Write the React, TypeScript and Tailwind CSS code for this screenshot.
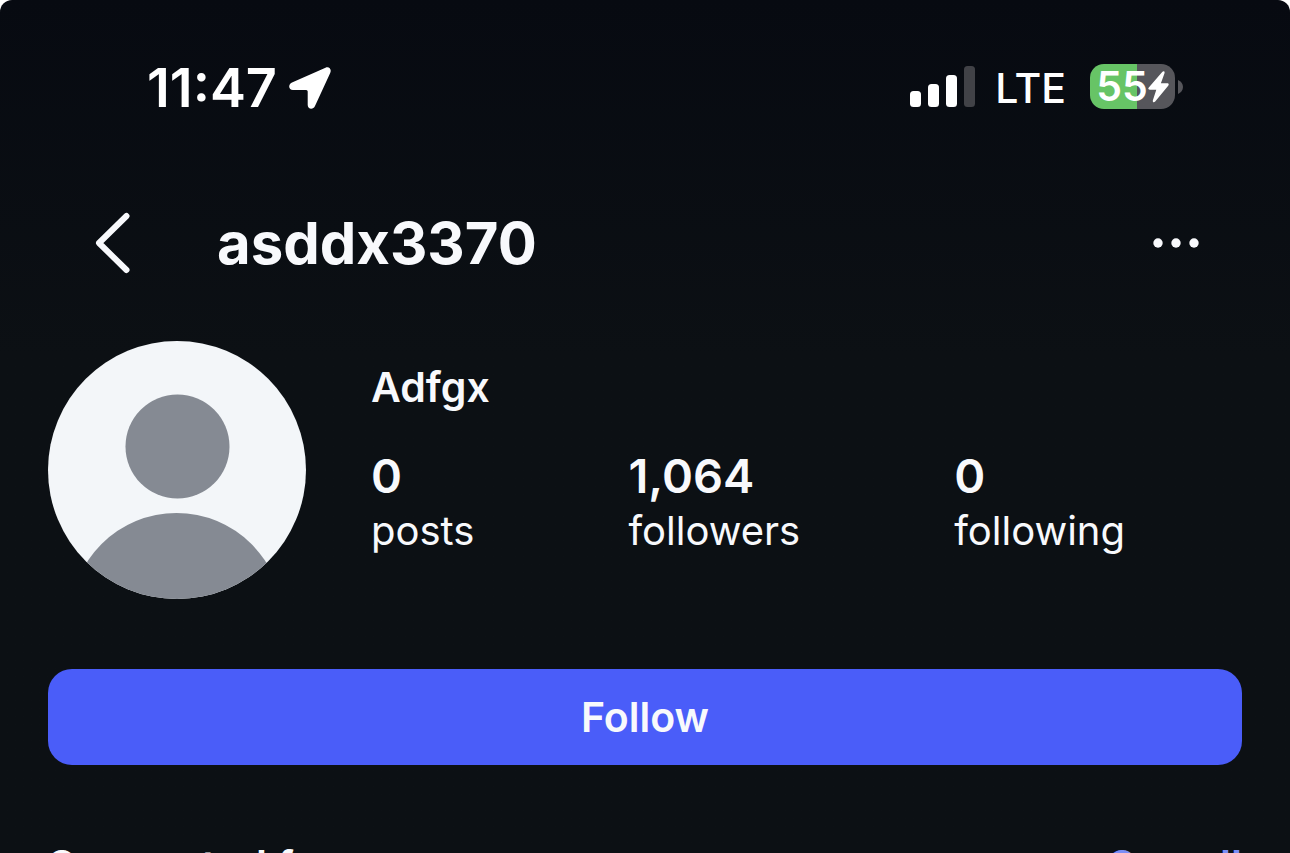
const stats = [
  { value: "0", label: "posts" },
  { value: "1,064", label: "followers" },
  { value: "0", label: "following" },
];

function StatusBar() {
  return (
    <div className="flex h-[176px] items-center justify-between pr-[107px] pl-[147px] text-white">
      <div className="flex items-center gap-3">
        <time className="text-[54px] leading-[64px] font-semibold">11:47</time>
        <svg className="h-[42px] w-[42px]" viewBox="0 0 42 42" fill="currentColor" aria-hidden="true">
          <path d="M36.500.7 3 15.500C-1.200 17.500-.5 23.100 4 23.100H17.200Q18.700 23.100 18.700 24.600V38C18.700 42.400 24.200 43 26 39.100L41.200 6.100C42.900 2.400 40.200-.9 36.500.7Z" />
        </svg>
      </div>
      <div className="flex items-center">
        <svg className="h-[44px] w-[66px]" viewBox="0 0 66 44" aria-hidden="true">
          <rect x="1" y="25" width="11" height="16" rx="3.500" fill="#fff" />
          <rect x="19" y="18" width="11" height="23" rx="3.500" fill="#fff" />
          <rect x="37" y="9" width="11" height="32" rx="3.500" fill="#fff" />
          <rect x="55" y="0" width="11" height="41" rx="3.500" fill="#414247" />
        </svg>
        <span className="pr-6 pl-5 text-[41px] leading-[64px] font-medium">LTE</span>
        <div className="flex items-center gap-[3px] pb-[3px]">
          <div className="flex h-[45px] w-[85px] items-center justify-center rounded-[14px] bg-linear-to-r from-[#67c466] from-55% to-[#56565b] to-55%">
            <span className="text-[41px] leading-[45px] font-semibold">55</span>
            <svg className="h-[32px] w-[21px]" viewBox="0 0 21 32" fill="currentColor" aria-hidden="true">
              <path d="M14.200 1 .8 16.400C-.2 17.600.3 18.800 1.800 18.800H8.300L4.900 29.300C4.300 31.200 5.900 32 7.200 30.600L20.200 14.700C21.200 13.500 20.700 12.300 19.200 12.300H12.900L16.500 2.200C17.100.3 15.500-.4 14.200 1Z" />
            </svg>
          </div>
          <svg className="h-[14px] w-[5px]" viewBox="0 0 5 14" fill="#56565b" aria-hidden="true">
            <path d="M0 0C3 1.300 5 4 5 7S3 12.700 0 14Z" />
          </svg>
        </div>
      </div>
    </div>
  );
}

function Header() {
  return (
    <header className="flex h-[134px] items-center pr-[90px] pl-[93px]">
      <button type="button" aria-label="Back" className="flex">
        <svg className="h-[64px] w-[40px]" viewBox="0 0 40 64" fill="none" aria-hidden="true">
          <path d="M33.500 5 6 32 33.500 59" stroke="#f8f9fc" strokeWidth="6" strokeLinecap="round" strokeLinejoin="round" />
        </svg>
      </button>
      <h1 className="flex-1 pl-[84px] text-[58px] leading-[72px] font-bold">asddx3370</h1>
      <button type="button" aria-label="More options" className="flex">
        <svg className="h-[12px] w-[48px]" viewBox="0 0 48 12" fill="#f8f9fc" aria-hidden="true">
          <circle cx="6" cy="6" r="4.700" />
          <circle cx="24" cy="6" r="4.700" />
          <circle cx="42" cy="6" r="4.700" />
        </svg>
      </button>
    </header>
  );
}

function Avatar() {
  return (
    <svg className="h-[258px] w-[258px] shrink-0" viewBox="0 0 258 258" role="img" aria-label="Profile picture">
      <clipPath id="avatar-clip">
        <circle cx="129" cy="129" r="129" />
      </clipPath>
      <g clipPath="url(#avatar-clip)">
        <rect width="258" height="258" fill="#f3f6f9" />
        <circle cx="129.500" cy="105.500" r="52" fill="#858a93" />
        <circle cx="128.500" cy="278" r="106" fill="#858a93" />
      </g>
    </svg>
  );
}

export default function App() {
  return (
    <div className="h-screen overflow-hidden bg-white font-['Inter','Liberation_Sans',sans-serif] text-[#f8f9fc]">
      <div className="min-h-full rounded-t-[12px] bg-linear-to-b from-[#070a11] to-[#0c1014] to-40%">
        <StatusBar />
        <Header />
        <main className="px-12 pt-[31px]">
          <section className="flex gap-[65px]">
            <Avatar />
            <div className="pt-5">
              <p className="text-[41px] leading-[52px] font-semibold">Adfgx</p>
              <dl className="flex gap-[154px] pt-[34px]">
                {stats.map((stat) => (
                  <div key={stat.label} className="flex flex-col-reverse">
                    <dt className="text-[40px] leading-[52px]">{stat.label}</dt>
                    <dd className="text-[47px] leading-[58px] font-semibold">{stat.value}</dd>
                  </div>
                ))}
              </dl>
            </div>
          </section>
          <button type="button" className="mt-[70px] h-24 w-full rounded-[24px] bg-[#4a5df9] text-[41px] leading-[52px] font-semibold">
            Follow
          </button>
          <section className="flex justify-between pt-[75px] text-[42px] leading-[52px]">
            <h2 className="font-semibold">Suggested for you</h2>
            <a href="#suggested" className="font-semibold text-[#7b8df5]">See all</a>
          </section>
        </main>
      </div>
    </div>
  );
}
